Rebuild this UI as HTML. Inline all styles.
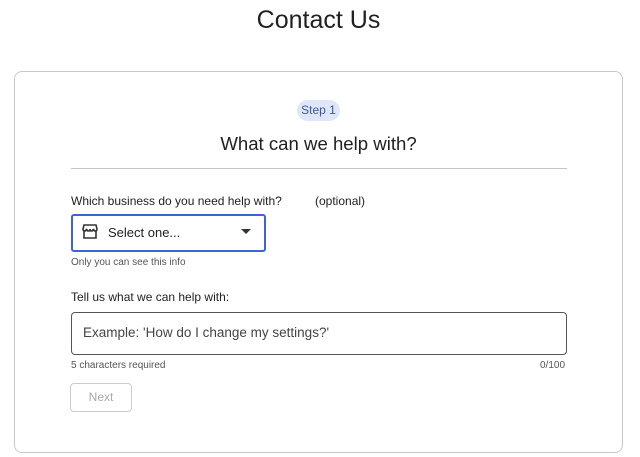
<!DOCTYPE html>
<html><head><style>
body{margin:0;width:640px;height:457px;background:#fff;font-family:"Liberation Sans",Arial,sans-serif;color:#202124;position:relative;overflow:hidden}
.a{position:absolute;white-space:nowrap}
</style></head><body>
<div class="a" style="left:0;width:637px;top:6px;text-align:center;font-size:25px;color:#202124">Contact Us</div>
<div class="a" style="left:14px;top:71px;width:607px;height:380px;border:1px solid #c8c8c8;border-radius:8px"></div>
<div class="a" style="left:297px;top:100px;width:43px;height:21px;border-radius:11px;background:#dfe6f7;color:#3c5a99;font-size:12px;line-height:21px;text-align:center">Step 1</div>
<div class="a" style="left:0;width:637px;top:133px;text-align:center;font-size:18.6px">What can we help with?</div>
<div class="a" style="left:71px;top:168px;width:496px;height:1px;background:#c4c4c4"></div>
<div class="a" style="left:71px;top:194px;font-size:12px">Which business do you need help with?</div>
<div class="a" style="left:315px;top:194px;font-size:12px">(optional)</div>
<div class="a" style="left:71px;top:214px;width:191px;height:34px;border:2px solid #3f63d0;border-radius:3px"></div>
<svg class="a" style="left:81px;top:224px" width="18" height="16" viewBox="0 0 18 16"><path d="M2 5 L3 1 H15 L16 5 Q16 7 14.5 7 Q13 7 12.5 5 Q12 7 10.5 7 Q9 7 9 5 Q9 7 7.5 7 Q6 7 5.5 5 Q5 7 3.5 7 Q2 7 2 5 Z M3 7 V14 H15 V7" fill="none" stroke="#333" stroke-width="1.6"/></svg>
<div class="a" style="left:108px;top:225px;font-size:13px">Select one...</div>
<svg class="a" style="left:241px;top:229px" width="10" height="6"><path d="M0 0H10L5 5Z" fill="#333"/></svg>
<div class="a" style="left:71px;top:257px;font-size:10px;color:#555">Only you can see this info</div>
<div class="a" style="left:71px;top:290px;font-size:12px">Tell us what we can help with:</div>
<div class="a" style="left:71px;top:312px;width:494px;height:41px;border:1px solid #555;border-radius:4px"></div>
<div class="a" style="left:83px;top:325px;font-size:13.5px;color:#444">Example: 'How do I change my settings?'</div>
<div class="a" style="left:71px;top:360px;font-size:10px;color:#555">5 characters required</div>
<div class="a" style="left:540px;top:360px;font-size:10px;color:#555">0/100</div>
<div class="a" style="left:70px;top:383px;width:60px;height:27px;border:1px solid #ccc;border-radius:4px;color:#aaa;font-size:12px;line-height:27px;text-align:center">Next</div>
</body></html>
